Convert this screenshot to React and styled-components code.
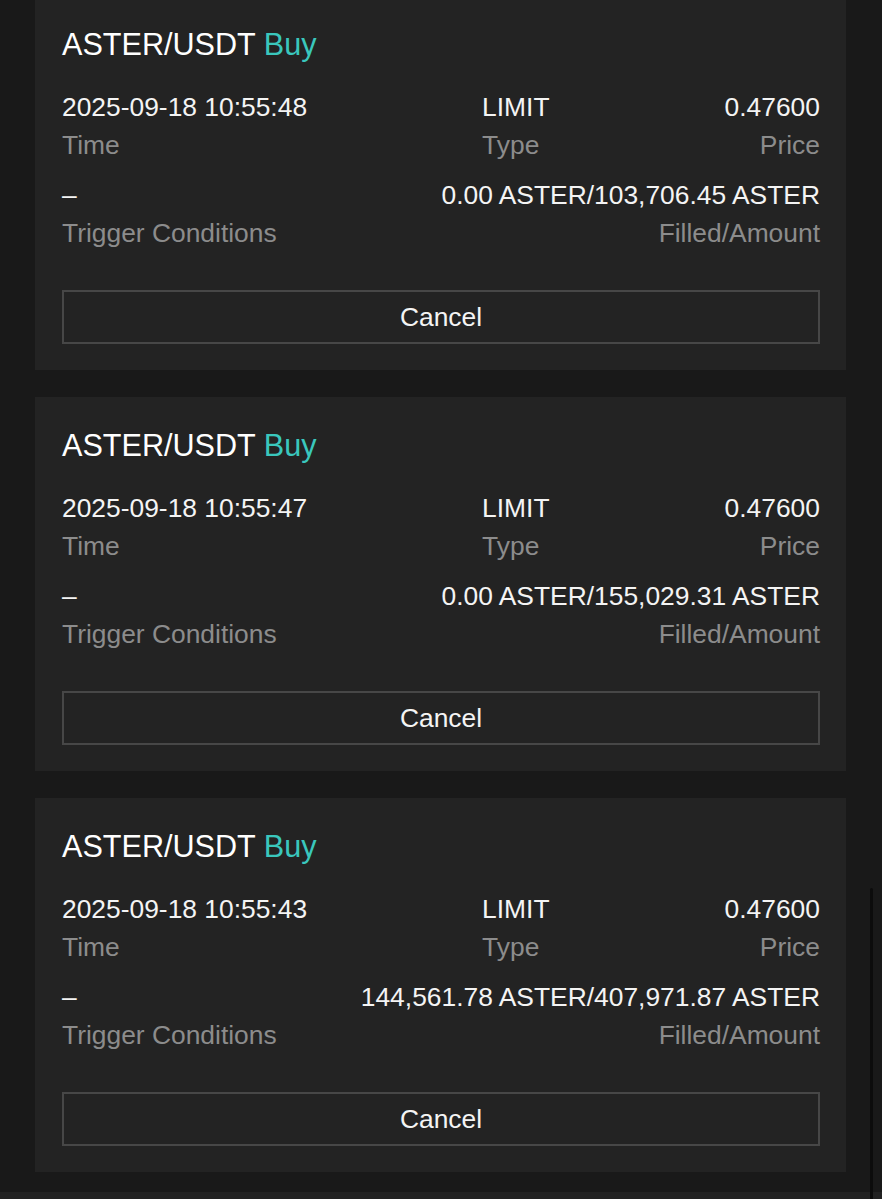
import React from 'react'
import styled, { createGlobalStyle } from 'styled-components'

const GlobalStyle = createGlobalStyle`
  html, body {
    margin: 0;
    padding: 0;
    background: #181818;
    overflow: hidden;
  }

  body {
    font-family: "Liberation Sans", Arial, Helvetica, sans-serif;
    -webkit-font-smoothing: antialiased;
  }
`

const Page = styled.div`
  position: relative;
  height: 1199px;
  overflow: hidden;
  background: #191919;
  display: flex;
  flex-direction: column;
`

const OrderList = styled.div`
  display: flex;
  flex-direction: column;
  gap: 27px;
  margin-top: -4px;
  padding: 0 36px 0 35px;
  flex: 1;
`

const Card = styled.section`
  background: #232323;
  padding: 29px 26px 26px 27px;
  display: flex;
  flex-direction: column;
`

const Title = styled.div`
  font-size: 30.6px;
  line-height: 38px;
  color: #ffffff;
  margin-bottom: 25px;
`

const Side = styled.span`
  color: #3ac7bd;
`

const Rows = styled.div`
  display: flex;
  flex-direction: column;
  gap: 12px;
`

const Row = styled.div`
  display: flex;
  justify-content: space-between;
`

const Field = styled.div`
  display: flex;
  flex-direction: column;
  align-items: ${({ align }) => (align === 'right' ? 'flex-end' : 'flex-start')};
  font-size: 26.4px;
  line-height: 38px;
  white-space: nowrap;
`

const Value = styled.div`
  color: #f4f4f4;
`

const Label = styled.div`
  color: #8c8c8c;
`

const CancelButton = styled.button`
  margin-top: 38px;
  height: 54px;
  box-sizing: border-box;
  border: 2px solid #474747;
  background: transparent;
  color: #f4f4f4;
  font-family: inherit;
  font-size: 26.4px;
  line-height: 1;
  padding: 0;
  cursor: pointer;
`

const BottomBar = styled.div`
  height: 7px;
  margin-top: 18px;
  background: #222222;
  flex-shrink: 0;
`

const ScrollThumb = styled.div`
  position: absolute;
  right: 9px;
  top: 888px;
  bottom: 0;
  width: 3px;
  border-radius: 2px 2px 0 0;
  background: #0c0c0c;
`

const orders = [
  {
    time: '2025-09-18 10:55:48',
    type: 'LIMIT',
    price: '0.47600',
    trigger: '–',
    filled: '0.00 ASTER/103,706.45 ASTER',
  },
  {
    time: '2025-09-18 10:55:47',
    type: 'LIMIT',
    price: '0.47600',
    trigger: '–',
    filled: '0.00 ASTER/155,029.31 ASTER',
  },
  {
    time: '2025-09-18 10:55:43',
    type: 'LIMIT',
    price: '0.47600',
    trigger: '–',
    filled: '144,561.78 ASTER/407,971.87 ASTER',
  },
]

const OrderCard = ({ order }) => (
  <Card>
    <Title>
      {'ASTER/USDT '}
      <Side>Buy</Side>
    </Title>
    <Rows>
      <Row>
        <Field>
          <Value>{order.time}</Value>
          <Label>Time</Label>
        </Field>
        <Field>
          <Value>{order.type}</Value>
          <Label>Type</Label>
        </Field>
        <Field align="right">
          <Value>{order.price}</Value>
          <Label>Price</Label>
        </Field>
      </Row>
      <Row>
        <Field>
          <Value>{order.trigger}</Value>
          <Label>Trigger Conditions</Label>
        </Field>
        <Field align="right">
          <Value>{order.filled}</Value>
          <Label>Filled/Amount</Label>
        </Field>
      </Row>
    </Rows>
    <CancelButton type="button">Cancel</CancelButton>
  </Card>
)

const App = () => (
  <>
    <GlobalStyle />
    <Page>
      <OrderList>
        {orders.map((order) => (
          <OrderCard key={order.time} order={order} />
        ))}
      </OrderList>
      <BottomBar />
      <ScrollThumb />
    </Page>
  </>
)

export default App
